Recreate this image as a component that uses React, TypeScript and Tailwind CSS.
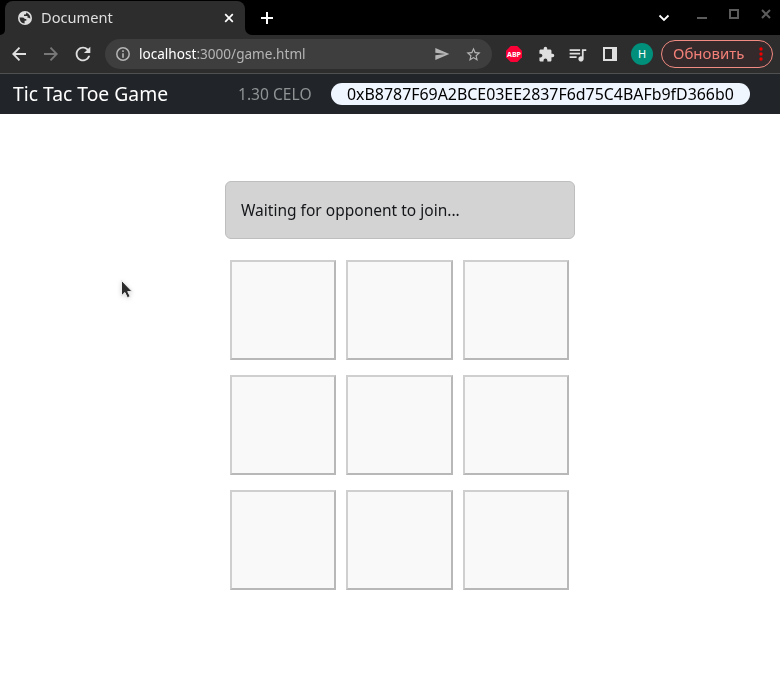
import React from "react";
import { MdExtension, MdQueueMusic, MdRefresh, MdSend, MdStarBorder } from "react-icons/md";

function TabStrip() {
  return (
    <div className="flex h-[35px] bg-black text-white">
      <div className="flex w-[5px] items-end bg-[#2d2d2d]">
        <div className="h-full w-full rounded-br-[5px] bg-black" />
      </div>
      <div className="mt-px flex w-[240px] items-center rounded-t-[8px] bg-[#2d2d2d] pl-[13px] text-[#dfdfdf]">
        <svg width="14" height="14" viewBox="0 0 14 14">
          <circle cx="7" cy="7" r="7" fill="#dfdfdf" />
          <path d="M1.5 6.5h3.2q1.800 0 2 1.600h1.600v1.700H6.600v2.600Q2 12.500 1.500 6.500zM8.200 1.600v1q0 1-1 1H6v1.500h3.500v1.700h1q1 0 1.700 1.300.8-4.500-4-6.500z" fill="#2d2d2d" />
        </svg>
        <span className="ml-[9px] flex-1 text-[14px] leading-5">
          <span className="inline-block origin-left scale-x-[1.045]">Document</span>
        </span>
        <svg width="10" height="10" className="mr-[11px]" stroke="white" strokeWidth="1.700">
          <path d="M1.200 1.200l7.600 7.600M8.800 1.200l-7.600 7.600" />
        </svg>
      </div>
      <div className="flex w-[7px] bg-[#2d2d2d]">
        <div className="h-full w-full rounded-bl-[7px] bg-black" />
      </div>
      <svg width="14" height="14" className="mt-[11px] ml-[8px]" stroke="white" strokeWidth="2">
        <path d="M7 1v12M1 7h12" />
      </svg>
      <svg width="122" height="24" className="ml-auto" fill="none">
        <path d="M1.500 15.500l4.500 4.500 4.500-4.500" stroke="white" strokeWidth="1.800" />
        <path d="M39 18h10M72 10h8v8h-8z" stroke="#5c5c5c" strokeWidth="2" />
        <path d="M104 10l8 8M112 10l-8 8" stroke="#5c5c5c" strokeWidth="2" />
      </svg>
    </div>
  );
}

function Toolbar() {
  return (
    <div className="flex h-[39px] items-center border-b border-[#505050] bg-[#2d2d2d] pl-[12px] text-[#dfdfdf]">
      <svg width="14" height="14" fill="none" stroke="currentColor" strokeWidth="1.900">
        <path d="M14 7H1.500M7.500.7L1.300 7l6.200 6.300" />
      </svg>
      <svg width="14" height="14" fill="none" stroke="#777" strokeWidth="1.900" className="ml-[18px]">
        <path d="M0 7h12.500M6.500.7L12.700 7l-6.200 6.300" />
      </svg>
      <MdRefresh size={22} className="ml-[14px]" />
      <div className="ml-[11px] flex h-[30px] w-[387px] items-center rounded-full bg-[#3e3e3e] pl-[11px] text-[#b5b5b5]">
        <svg width="14" height="14" fill="none" stroke="currentColor">
          <circle cx="7" cy="7" r="6.200" strokeWidth="1.500" />
          <path d="M7 3.300v1.600M7 6.200v4.500" strokeWidth="1.600" />
        </svg>
        <span className="ml-[9px] w-[170px] whitespace-nowrap text-[14px] leading-5">
          <span className="inline-block origin-left scale-x-[.97]">
            <span className="text-white">localhost</span>:3000/game.html
          </span>
        </span>
        <MdSend size={16} className="ml-[125px]" />
        <MdStarBorder size={17} className="ml-[15px]" />
      </div>
      <svg width="16" height="16" className="ml-[14px]">
        <path d="M4.700 0h6.600L16 4.700v6.600L11.300 16H4.700L0 11.300V4.700z" fill="#fa0037" />
        <text x="8" y="10.700" textAnchor="middle" textLength="14" lengthAdjust="spacingAndGlyphs" fill="white" fontSize="7.500" fontWeight="700">ABP</text>
      </svg>
      <MdExtension size={17} className="ml-[16px]" />
      <MdQueueMusic size={21} className="ml-[12px]" />
      <svg width="14" height="14" className="ml-[15px]">
        <path fillRule="evenodd" d="M0 0h14v14H0zM2 2v10h7V2z" fill="#dfdfdf" />
      </svg>
      <div className="ml-[14px] flex size-[22px] items-center justify-center rounded-full bg-[#008f7a] text-[11px] text-white">H</div>
      <div className="ml-[8px] flex h-[28px] w-[112px] items-center rounded-full border border-[#f28b82] bg-[#352a2b] pl-[11px] text-[#f28078]">
        <span className="w-[72px] whitespace-nowrap text-[14px] leading-5">
          <span className="inline-block origin-left scale-x-[1.070]">Обновить</span>
        </span>
        <svg width="4" height="14" className="ml-[14px]" fill="#f00000">
          <circle cx="2" cy="2" r="1.700" />
          <circle cx="2" cy="7" r="1.700" />
          <circle cx="2" cy="12" r="1.700" />
        </svg>
      </div>
    </div>
  );
}

function Navbar() {
  return (
    <nav className="flex h-[40px] items-center bg-[#212529] pl-[13px]">
      <span className="w-[225px] whitespace-nowrap text-[20px] text-white">
        <span className="inline-block origin-left scale-x-[.965]">Tic Tac Toe Game</span>
      </span>
      <span className="w-[93px] whitespace-nowrap text-[16px] text-[#909294]">
        <span className="inline-block origin-left scale-x-[.975]">1.30 CELO</span>
      </span>
      <div className="flex h-[22px] w-[419px] items-center rounded-full bg-[#f0f6ff] pl-[16px] text-[16px] whitespace-nowrap text-black">
        <span className="inline-block origin-left scale-x-[.994]">0xB8787F69A2BCE03EE2837F6d75C4BAFb9fD366b0</span>
      </div>
    </nav>
  );
}

export default function App() {
  return (
    <div className="relative flex h-[687px] w-[780px] flex-col overflow-hidden bg-white font-['Noto_Sans',sans-serif]">
      <TabStrip />
      <Toolbar />
      <Navbar />
      <main className="ml-[225px] w-[350px] pt-[67px]">
        <div className="flex h-[58px] items-center rounded-[6px] border border-[#bcbebf] bg-[#d3d3d3] pl-[15px] text-[16px] text-[#141619]">
          <span className="inline-block origin-left scale-x-[.970] whitespace-nowrap">Waiting for opponent to join...</span>
        </div>
        <div className="mt-[21px] ml-[5px] grid w-[339px] grid-cols-3 gap-x-[10px] gap-y-[15px]">
          {Array.from({ length: 9 }, (_, i) => (
            <button key={i} aria-label={`Cell ${i + 1}`} className="h-[100px] border-2 border-t-[#cfcfcf] border-r-[#b8b8b8] border-b-[#b8b8b8] border-l-[#cfcfcf] bg-[#f9f9f9]" />
          ))}
        </div>
      </main>
      <svg width="18" height="24" className="absolute top-[278px] left-[119px] drop-shadow-sm">
        <path d="M2.500 2.500v15.200l3.400-3.200 2.500 5.300 2.800-1.400-2.500-4.800h4.500z" fill="#2c2c2c" stroke="#eee" strokeWidth="1" />
      </svg>
    </div>
  );
}
